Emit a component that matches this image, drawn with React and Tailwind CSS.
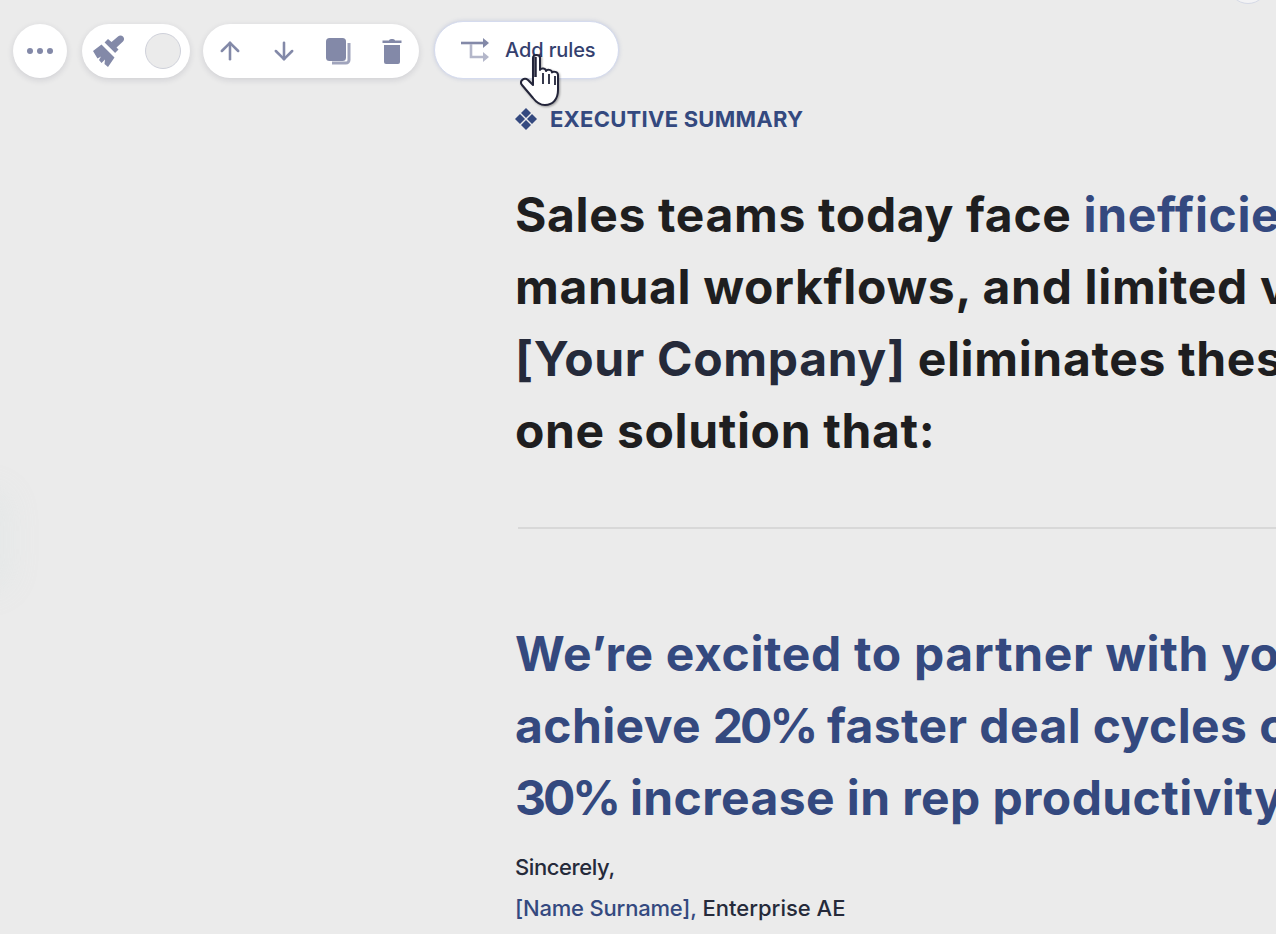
import React from 'react';
import { ArrowUp, ArrowDown } from 'lucide-react';

const BrushIcon = () => (
  <svg width="34" height="34" viewBox="0 0 34 34" fill="#8389a8">
    <path d="M25 2.500c1.500-1.500 3.600-1.400 5 0s1.500 3.500 0 5l-6.500 6 2 2-3.500 3.500-10.500-10.500 3.500-3.500 3.500 3z" />
    <path d="M8.500 10.500l13 13-6.500 9.500-3.500-3 .5-4.500-3.500 3.500-2.500-3 2-3.500-3.500 2L0 17z" />
    <path d="M9 7.500l15 15" stroke="#fff" strokeWidth="1.800" />
  </svg>
);

const CopyIcon = () => (
  <svg width="25" height="27" viewBox="0 0 25 27">
    <path d="M23 5v17a3 3 0 0 1-3 3H6" fill="none" stroke="#a0a4bc" strokeWidth="3" />
    <rect x="0" y="0" width="20" height="23" rx="3.500" fill="#8389a8" />
  </svg>
);

const TrashIcon = () => (
  <svg width="20" height="26" viewBox="0 0 20 26" fill="#8389a8">
    <path d="M7 2.500c0-2 6-2 6 0h6.500v2.500H.5V2.500z" />
    <path d="M2 7h16v17a2 2 0 0 1-2 2H4a2 2 0 0 1-2-2z" />
  </svg>
);

const RulesIcon = () => (
  <svg width="32" height="26" viewBox="0 0 32 26" fill="none" strokeWidth="2.600">
    <path d="M1 6h25" stroke="#8389a8" />
    <path d="M23 1l6 5-6 5z" fill="#8389a8" />
    <path d="M11 7v13h15" stroke="#b4b7ca" />
    <path d="M23 15l6 5-6 5z" fill="#b4b7ca" />
  </svg>
);

const DiamondIcon = () => (
  <svg width="22" height="22" viewBox="0 0 22 22" fill="#34497f">
    <path d="M11 0l5 5-5 5-5-5z" />
    <path d="M5 6l5 5-5 5-5-5z" />
    <path d="M17 6l5 5-5 5-5-5z" />
    <path d="M11 12l5 5-5 5-5-5z" />
  </svg>
);

const HandCursor = () => (
  <svg width="42" height="56" viewBox="0 0 42 56" className="drop-shadow-[1px_1px_1px_rgba(0,0,0,0.35)]">
    <path
      d="M13 4c0-4 7-4 7 0v12c1-2.500 6-2 6 1 1-2 6-1.500 6 1.500 1-1.500 6-1 6 2.500v15c0 9-5 15-13 15-6 0-9-3-12-7L2 31c-3-4 2-8 6-5l5 5z"
      fill="#fff"
      stroke="#23253a"
      strokeWidth="2"
      strokeLinejoin="round"
    />
    <path d="M15.500 3v20" stroke="#23253a" strokeWidth="2.500" />
    <path d="M23 19v11M29 20v10M35 22v9" stroke="#23253a" strokeWidth="1.800" />
  </svg>
);

const pill = 'flex items-center h-[54px] bg-white rounded-full shadow-[0_2px_6px_rgba(40,45,70,0.14)]';

export default function App() {
  return (
    <div className="relative h-[934px] w-full overflow-hidden bg-[#ebebeb] font-['Inter',sans-serif] text-[#1e1e20]">
      {/* Edge bits from the rest of the editor */}
      <div className="absolute left-[-24px] top-[500px] h-[80px] w-[24px] rounded-full shadow-[0_0_28px_12px_rgba(228,232,232,0.9)]" />
      <div className="absolute left-[1228px] top-[-36px] h-[40px] w-[40px] rounded-full border border-[#d5d9e6] bg-[#f3f3f5]" />

      {/* Toolbar */}
      <div className="flex h-[81px] items-center pl-[13px] pt-[21px]">
        <div className={`${pill} w-[54px] justify-center gap-[4px]`}>
          <span className="h-[6px] w-[6px] rounded-full bg-[#8389a8]" />
          <span className="h-[6px] w-[6px] rounded-full bg-[#8389a8]" />
          <span className="h-[6px] w-[6px] rounded-full bg-[#8389a8]" />
        </div>
        <div className={`${pill} ml-[15px] w-[108px] gap-[18px] pl-[11px]`}>
          <BrushIcon />
          <span className="h-[36px] w-[36px] rounded-full border border-[#cfd1da] bg-[#ebebeb]" />
        </div>
        <div className={`${pill} ml-[13px] w-[216px] pl-[13px]`}>
          <ArrowUp size={28} color="#8389a8" strokeWidth={2.200} />
          <ArrowDown size={28} color="#8389a8" strokeWidth={2.200} className="ml-[26px]" />
          <span className="ml-[28px] flex"><CopyIcon /></span>
          <span className="ml-[31px] flex"><TrashIcon /></span>
        </div>
        <div className="mb-[2px] ml-[15px] flex h-[58px] w-[185px] items-center gap-[13px] rounded-full border border-[#d5dbee] bg-white pl-[25px] shadow-[0_0_4px_rgba(90,110,180,0.25)]">
          <RulesIcon />
          <span className="text-[20px] font-medium tracking-[-0.1px] text-[#34406e]">Add rules</span>
        </div>
      </div>

      <div className="absolute left-[520px] top-[54px]">
        <HandCursor />
      </div>

      {/* Document */}
      <div className="ml-[515px] whitespace-nowrap">
        <div className="mt-[26px] flex h-[24px] items-center gap-[13px]">
          <DiamondIcon />
          <span className="text-[22px] font-bold tracking-[0.25px] text-[#34497f]">EXECUTIVE SUMMARY</span>
        </div>
        <div className="mt-[48px] text-[48px] font-bold leading-[72px] tracking-[0.65px]">
          <p>Sales teams today face <span className="text-[#34497f]">inefficient processes,</span></p>
          <p>manual workflows, and limited visibility.</p>
          <p><span className="text-[#252a3a]">[Your Company]</span> eliminates these with an all-in-</p>
          <p>one solution that:</p>
        </div>
        <div className="ml-[3px] mt-[60px] h-[2px] bg-[#d8d8d8]" />
        <div className="mt-[89px] text-[48px] font-bold leading-[72px] text-[#34497f]">
          <p className="tracking-[0.65px]">We’re excited to partner with you to help you</p>
          <p className="tracking-[0.4px]">achieve <span className="tracking-[-3px]">20%</span> faster deal cycles coupled with a</p>
          <p className="tracking-[0.4px]"><span className="tracking-[-3px]">30%</span> increase in rep productivity.</p>
        </div>
        <div className="mt-[13px] text-[22px] font-medium leading-[41px] text-[#252a3a]">
          <p className="tracking-[-0.4px]">Sincerely,</p>
          <p><span className="tracking-[-0.2px] text-[#34497f]">[Name Surname],</span> Enterprise AE</p>
        </div>
      </div>
    </div>
  );
}
